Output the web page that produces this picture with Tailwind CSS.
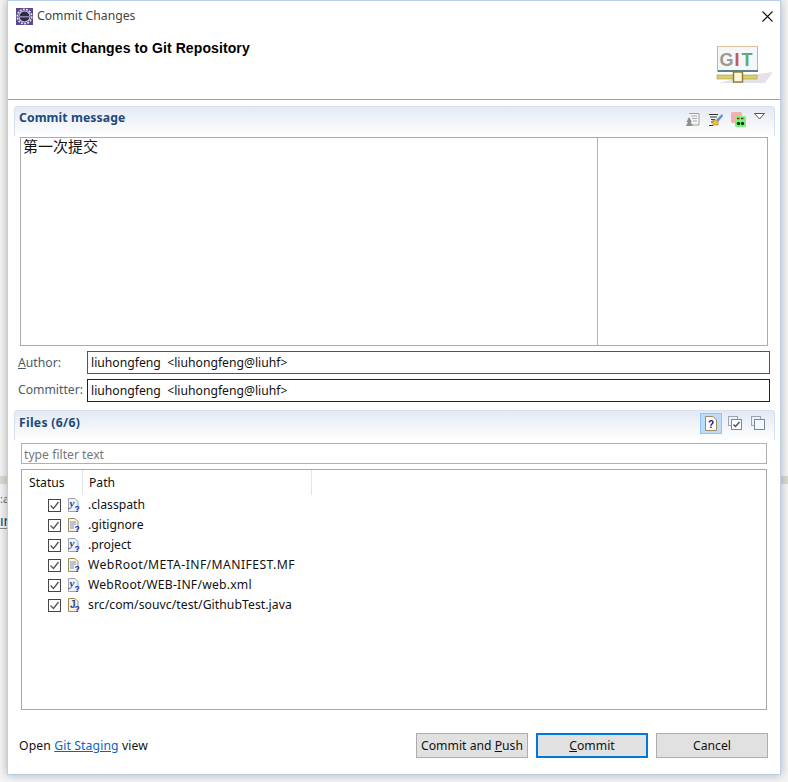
<!DOCTYPE html>
<html lang="en">
    <head>
        <meta charset="UTF-8" />
        <meta name="viewport" content="width=device-width, initial-scale=1.0" />
        <title>Commit Changes</title>
        <script src="https://cdn.jsdelivr.net/npm/@tailwindcss/browser@4"></script>
    </head>
    <body class="w-[788px] h-[782px] overflow-hidden relative bg-[#f4f4f4] font-['Noto_Sans','Noto_Sans_CJK_SC',sans-serif] text-[12.2px] text-[#111]">
        <!-- bits of the window behind the dialog -->
        <div class="absolute left-0 top-[476px] w-[788px] h-[8px] bg-[#dcdad0]"></div>
        <div class="absolute left-0 top-[491px] w-[7px] h-[16px] overflow-hidden text-[11px] leading-[16px] text-[#666] whitespace-nowrap">:a</div>
        <div class="absolute left-0 top-[513px] w-[7px] h-[16px] overflow-hidden text-[14px] leading-[15px] text-[#1c3f6e] border-b border-[#8a8a8a] whitespace-nowrap">ır</div>

        <!-- dialog -->
        <div class="absolute left-[7px] top-0 w-[774px] h-[775px] bg-white border border-[#b8d0e8] flex flex-col shadow-[0_0_9px_rgba(0,0,0,0.28)]">
            <!-- title bar -->
            <div class="h-[30px] shrink-0 flex items-center pl-[8px] pr-[7px]">
                <svg class="w-[17px] h-[17px]" viewBox="0 0 17 17">
                    <rect width="17" height="17" fill="#5a4a8c" />
                    <circle cx="8.5" cy="8.5" r="7.2" fill="none" stroke="#e4e4ea" stroke-width="1.6" stroke-dasharray="2 1.2" />
                    <circle cx="8.5" cy="8.5" r="6" fill="#d8d8dc" />
                    <circle cx="8.5" cy="8.5" r="5" fill="#2e2a44" />
                    <rect x="3.8" y="8" width="9.4" height="1.5" fill="#8c87b8" />
                </svg>
                <span class="ml-[4px] text-[#444]">Commit Changes</span>
                <svg class="ml-auto w-[11px] h-[11px]" viewBox="0 0 11 11">
                    <path d="M0.5 0.5L10.5 10.5M10.5 0.5L0.5 10.5" stroke="#111" stroke-width="1.1" fill="none" />
                </svg>
            </div>
            <!-- banner -->
            <div class="h-[69px] shrink-0 relative border-b border-[#a0a0a0] pl-[6px]">
                <div class="pt-[9px] font-bold font-['Liberation_Sans'] text-[14px] leading-[16px] tracking-[0.1px] text-black">Commit Changes to Git Repository</div>
                <svg class="absolute left-[707px] top-[15px] w-[60px] h-[40px]" viewBox="0 0 60 40">
                    <path d="M4 37L50 37L58 26L30 30Z" fill="#d8d4de" opacity="0.7" />
                    <rect x="2.5" y="0.5" width="40" height="25" fill="#f4f6f8" stroke="#a8bcc0" />
                    <path d="M2.5 .5H42.5" stroke="#e2c49a" />
                    <rect x="3" y="24" width="40" height="2" fill="#5e8286" />
                    <text x="4.5" y="20" font-family="Liberation Sans" font-weight="bold" font-size="18" fill="#9a9a9a">G</text>
                    <text x="19.5" y="20" font-family="Liberation Sans" font-weight="bold" font-size="18" fill="#c05a5a">I</text>
                    <text x="26.5" y="20" font-family="Liberation Sans" font-weight="bold" font-size="18" fill="#62a67c">T</text>
                    <rect x="2" y="29" width="40" height="4" fill="#d8cf6e" stroke="#a89a3c" stroke-width=".6" />
                    <rect x="18.5" y="26" width="9" height="10" fill="#fdf6dc" stroke="#8c7a24" stroke-width="1.4" />
                </svg>
            </div>
            <!-- commit message section -->
            <div class="mt-[6px] ml-[6px] mr-[5px] h-[304px] shrink-0 relative">
                <div class="h-[30px] rounded-t-[4px] border-t border-x border-[#d5e0ee] bg-gradient-to-b from-[#e4e9f4] to-white flex items-center pl-[4px] pr-[9px] pb-[6px]">
                    <span class="font-bold tracking-[0.1px] text-[#1c4a7c]">Commit message</span>
                    <div class="ml-auto mt-[2px] flex items-center gap-[8px]">
                        <svg class="w-[15px] h-[15px]" viewBox="0 0 15 15">
                            <path d="M4 1.5H14V13H7" fill="#f4f4f4" stroke="#a0a0a0" />
                            <path d="M6 4H12M7 6.5H12M8 9H12" stroke="#a8a8a8" />
                            <path d="M4 5L7 10H5.5L8 14H1L3 10H1.5Z" fill="#8c8c8c" />
                        </svg>
                        <svg class="w-[15px] h-[15px]" viewBox="0 0 15 15">
                            <path d="M1 2.5H10M2 5H9M3 7.5H7M3 10H5" stroke="#333" />
                            <path d="M14 2L8 8L10 10L15 4Z" fill="#5c8fd8" />
                            <rect x="5" y="8" width="5" height="5" fill="#f0c040" stroke="#b08820" stroke-width=".7" />
                            <path d="M1 13.5H5" stroke="#333" />
                        </svg>
                        <svg class="w-[15px] h-[15px]" viewBox="0 0 15 15">
                            <rect x="0" y="0" width="11" height="11" rx="1.5" fill="#f4b0b0" />
                            <rect x="4" y="4" width="11" height="11" rx="1.5" fill="#80f080" />
                            <path d="M6 6.5H8.5M10 6.5H12.5" stroke="#b01010" stroke-width="1.4" />
                            <circle cx="7.5" cy="11.5" r="1.7" fill="#084008" />
                            <circle cx="11.5" cy="11.5" r="1.7" fill="#084008" />
                        </svg>
                        <svg class="w-[11px] h-[7px] mb-[6px]" viewBox="0 0 11 7">
                            <path d="M0.5 0.5H10.5L5.5 6Z" fill="#fff" stroke="#555" />
                        </svg>
                    </div>
                </div>
                <div class="absolute left-[6px] top-[31px] w-[748px] h-[209px] border border-[#a8acb0] flex">
                    <div class="w-[577px] border-r border-[#b4b4b4] pl-[2px] text-[15px] leading-[17px] text-[#111]">第一次提交</div>
                </div>
                <div class="absolute left-[4px] top-[245px] w-[752px] flex items-center">
                    <span class="w-[69px] pt-[1px] text-[#4a5a6a]"><span class="underline">A</span>uthor:</span>
                    <div class="flex-1 h-[23px] border border-[#555] pl-[3px] leading-[21px]">liuhongfeng &nbsp;&lt;liuhongfeng@liuhf&gt;</div>
                </div>
                <div class="absolute left-[4px] top-[273px] w-[752px] flex items-center">
                    <span class="w-[69px] text-[#4a5a6a]">Committer:</span>
                    <div class="flex-1 h-[23px] border border-[#222] pl-[3px] leading-[21px]">liuhongfeng &nbsp;&lt;liuhongfeng@liuhf&gt;</div>
                </div>
            </div>
            <!-- files section -->
            <div class="ml-[6px] mr-[5px] h-[305px] shrink-0 relative">
                <div class="h-[30px] rounded-t-[4px] border-t border-x border-[#d5e0ee] bg-gradient-to-b from-[#e4e9f4] to-white flex items-center pl-[4px] pr-[9px] pb-[5px]">
                    <span class="font-bold tracking-[0.3px] text-[#1c4a7c]">Files (6/6)</span>
                    <div class="ml-auto flex items-center">
                        <div class="w-[22px] h-[21px] bg-[#bcdcf8] border border-[#90c4f4] flex items-center justify-center">
                            <svg class="w-[12px] h-[15px]" viewBox="0 0 12 15">
                                <path d="M.5 .5H8L11.5 4V14.5H.5Z" fill="#fff" stroke="#a08a5c" />
                                <text x="3" y="12" font-family="Liberation Sans" font-weight="bold" font-size="10" fill="#10108c">?</text>
                            </svg>
                        </div>
                        <svg class="ml-[6px] w-[14px] h-[14px]" viewBox="0 0 14 14">
                            <rect x=".5" y=".5" width="9" height="9" fill="#eef2f8" stroke="#9aa4b8" />
                            <rect x="3.5" y="3.5" width="10" height="10" fill="#fff" stroke="#7a88a4" />
                            <path d="M5.5 8.5L7.5 10.5L11.5 6" stroke="#3c4c6c" stroke-width="1.4" fill="none" />
                        </svg>
                        <svg class="ml-[9px] w-[14px] h-[14px]" viewBox="0 0 14 14">
                            <rect x=".5" y=".5" width="9" height="9" fill="#eef2f8" stroke="#9aa4b8" />
                            <rect x="3.5" y="3.5" width="10" height="10" fill="#f4f9ff" stroke="#7a88a4" />
                        </svg>
                    </div>
                </div>
            </div>
            <div class="absolute left-[13px] top-[442px] w-[746px] h-[21px] border border-[#b0b0b0] pl-[2px] pt-[1px] leading-[19px] text-[#777]">type filter text</div>
            <!-- file table -->
            <div class="absolute left-[13px] top-[468px] w-[746px] h-[241px] border border-[#a8a8a8]">
                <div class="flex h-[25px] leading-[25px]">
                    <div class="w-[61px] pl-[7px] border-r border-[#e4e4e4]">Status</div>
                    <div class="w-[229px] pl-[6px] border-r border-[#e4e4e4]">Path</div>
                </div>
                <div class="flex flex-col">
                    <div class="h-[20px] flex items-center pl-[26px]">
                        <span class="w-[13px] h-[13px] border border-[#444] flex items-center justify-center"><svg class="w-[11px] h-[11px]" viewBox="0 0 11 11"><path d="M1.5 5.5L4.5 8.5L9.5 2" stroke="#555" stroke-width="1.3" fill="none" /></svg></span>
                        <svg class="ml-[7px] w-[13px] h-[16px]" viewBox="0 -1 13 16"><path d="M.5 .5H7L10 3.5V13.5H.5Z" fill="#eef2f8" stroke="#9aa4b8" /><text x="1.5" y="9" font-family="Liberation Serif" font-style="italic" font-weight="bold" font-size="11" fill="#2a4a80">y</text><text x="6.5" y="13.5" font-family="Liberation Sans" font-weight="bold" font-size="8.5" fill="#1030d0">?</text></svg>
                        <span class="ml-[7px]">.classpath</span>
                    </div>
                    <div class="h-[20px] flex items-center pl-[26px]">
                        <span class="w-[13px] h-[13px] border border-[#444] flex items-center justify-center"><svg class="w-[11px] h-[11px]" viewBox="0 0 11 11"><path d="M1.5 5.5L4.5 8.5L9.5 2" stroke="#555" stroke-width="1.3" fill="none" /></svg></span>
                        <svg class="ml-[7px] w-[13px] h-[16px]" viewBox="0 -1 13 16"><path d="M.5 .5H7L10 3.5V13.5H.5Z" fill="#f6f2e4" stroke="#a08a5c" /><path d="M2 4H8M2 6H8M2 8H6M2 10H6" stroke="#7a94c4" /><text x="6.5" y="13.5" font-family="Liberation Sans" font-weight="bold" font-size="8.5" fill="#1030d0">?</text></svg>
                        <span class="ml-[7px]">.gitignore</span>
                    </div>
                    <div class="h-[20px] flex items-center pl-[26px]">
                        <span class="w-[13px] h-[13px] border border-[#444] flex items-center justify-center"><svg class="w-[11px] h-[11px]" viewBox="0 0 11 11"><path d="M1.5 5.5L4.5 8.5L9.5 2" stroke="#555" stroke-width="1.3" fill="none" /></svg></span>
                        <svg class="ml-[7px] w-[13px] h-[16px]" viewBox="0 -1 13 16"><path d="M.5 .5H7L10 3.5V13.5H.5Z" fill="#eef2f8" stroke="#9aa4b8" /><text x="1.5" y="9" font-family="Liberation Serif" font-style="italic" font-weight="bold" font-size="11" fill="#2a4a80">y</text><text x="6.5" y="13.5" font-family="Liberation Sans" font-weight="bold" font-size="8.5" fill="#1030d0">?</text></svg>
                        <span class="ml-[7px]">.project</span>
                    </div>
                    <div class="h-[20px] flex items-center pl-[26px]">
                        <span class="w-[13px] h-[13px] border border-[#444] flex items-center justify-center"><svg class="w-[11px] h-[11px]" viewBox="0 0 11 11"><path d="M1.5 5.5L4.5 8.5L9.5 2" stroke="#555" stroke-width="1.3" fill="none" /></svg></span>
                        <svg class="ml-[7px] w-[13px] h-[16px]" viewBox="0 -1 13 16"><path d="M.5 .5H7L10 3.5V13.5H.5Z" fill="#f6f2e4" stroke="#a08a5c" /><path d="M2 4H8M2 6H8M2 8H6M2 10H6" stroke="#7a94c4" /><text x="6.5" y="13.5" font-family="Liberation Sans" font-weight="bold" font-size="8.5" fill="#1030d0">?</text></svg>
                        <span class="ml-[7px] tracking-[0.42px]">WebRoot/META-INF/MANIFEST.MF</span>
                    </div>
                    <div class="h-[20px] flex items-center pl-[26px]">
                        <span class="w-[13px] h-[13px] border border-[#444] flex items-center justify-center"><svg class="w-[11px] h-[11px]" viewBox="0 0 11 11"><path d="M1.5 5.5L4.5 8.5L9.5 2" stroke="#555" stroke-width="1.3" fill="none" /></svg></span>
                        <svg class="ml-[7px] w-[13px] h-[16px]" viewBox="0 -1 13 16"><path d="M.5 .5H7L10 3.5V13.5H.5Z" fill="#eef2f8" stroke="#9aa4b8" /><text x="1.5" y="9" font-family="Liberation Serif" font-style="italic" font-weight="bold" font-size="11" fill="#2a4a80">y</text><text x="6.5" y="13.5" font-family="Liberation Sans" font-weight="bold" font-size="8.5" fill="#1030d0">?</text></svg>
                        <span class="ml-[7px] tracking-[0.2px]">WebRoot/WEB-INF/web.xml</span>
                    </div>
                    <div class="h-[20px] flex items-center pl-[26px]">
                        <span class="w-[13px] h-[13px] border border-[#444] flex items-center justify-center"><svg class="w-[11px] h-[11px]" viewBox="0 0 11 11"><path d="M1.5 5.5L4.5 8.5L9.5 2" stroke="#555" stroke-width="1.3" fill="none" /></svg></span>
                        <svg class="ml-[7px] w-[13px] h-[16px]" viewBox="0 -1 13 16"><path d="M.5 .5H7L10 3.5V13.5H.5Z" fill="#f6f2e4" stroke="#a08a5c" /><text x="2" y="10" font-family="Liberation Sans" font-weight="bold" font-size="10" fill="#2a4a80">J</text><text x="6.5" y="13.5" font-family="Liberation Sans" font-weight="bold" font-size="8.5" fill="#1030d0">?</text></svg>
                        <span class="ml-[7px] tracking-[0.06px]">src/com/souvc/test/GithubTest.java</span>
                    </div>
                </div>
            </div>
            <!-- footer -->
            <div class="absolute left-[11px] top-[732px] w-[749px] flex items-center">
                <span class="pt-[1px] tracking-[0.12px]">Open <span class="text-[#0a64c8] underline">Git Staging</span> view</span>
                <div class="ml-auto flex">
                    <button class="w-[112px] h-[25px] pt-[1px] bg-[#e1e1e1] border border-[#adadad] text-center">Commit and <span class="underline">P</span>ush</button>
                    <button class="ml-[8px] w-[112px] h-[25px] pt-[1px] bg-[#e1e1e1] border-2 border-[#0078d7] text-center"><span class="underline">C</span>ommit</button>
                    <button class="ml-[8px] w-[112px] h-[25px] pt-[1px] bg-[#e1e1e1] border border-[#adadad] text-center">Cancel</button>
                </div>
            </div>
        </div>
    </body>
</html>
